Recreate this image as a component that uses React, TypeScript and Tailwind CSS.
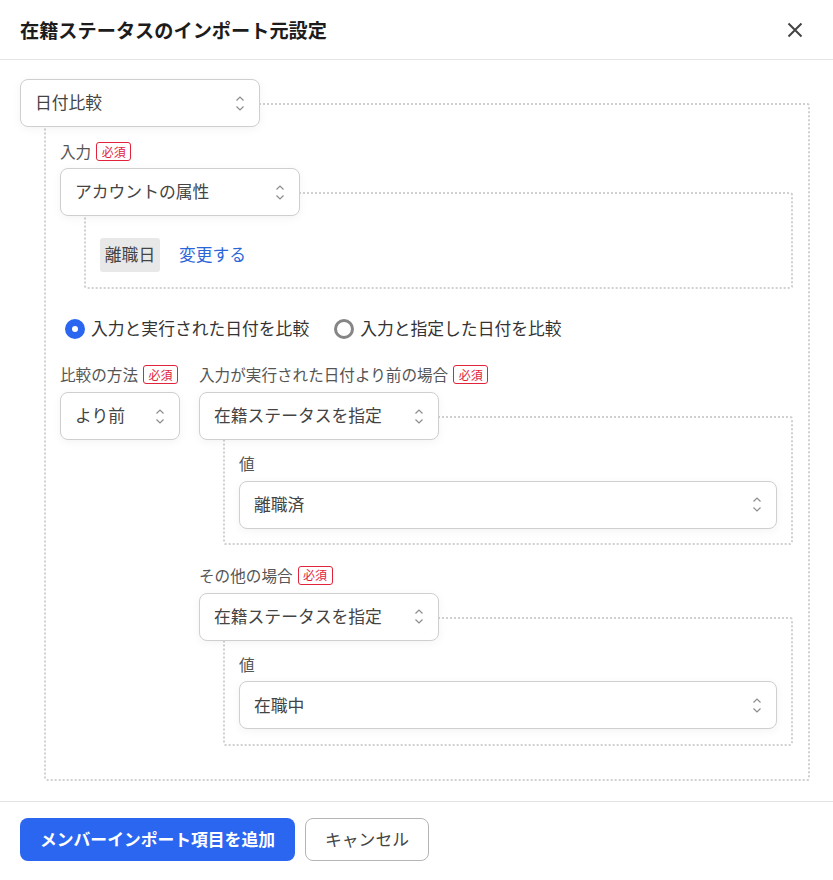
import type { ReactNode } from "react";

function UpDown() {
  return (
    <svg
      className="h-[15px] w-2 shrink-0 text-[#8c8c8c]"
      viewBox="0 0 8 15"
      fill="none"
      stroke="currentColor"
      strokeWidth="1.2"
      aria-hidden
    >
      <path d="M.5 4.500L4 1l3.500 3.500" />
      <path d="M.5 10.500L4 14l3.500-3.500" />
    </svg>
  );
}

function Select({ value, className }: { value: string; className: string }) {
  return (
    <div
      className={`relative z-10 flex h-12 shrink-0 items-center justify-between rounded-lg border border-[#cfcfcf] bg-white pl-[14px] pr-[15px] text-[#444] shadow-[0_2px_10px_rgba(0,0,0,0.05)] ${className}`}
    >
      <span className="text-[16.8px]">{value}</span>
      <UpDown />
    </div>
  );
}

function Required() {
  return (
    <span className="flex h-[19px] w-[35px] items-center justify-center rounded-[3px] border border-[#e2233c] text-xs text-[#e2233c]">
      必須
    </span>
  );
}

function Label({ text, required }: { text: string; required?: boolean }) {
  return (
    <div className="flex h-[19px] items-center gap-[5px] text-[15.6px] text-[#555]">
      <span className="whitespace-nowrap">{text}</span>
      {required ? <Required /> : null}
    </div>
  );
}

function Branch({
  select,
  className,
  children,
}: {
  select: ReactNode;
  className: string;
  children: ReactNode;
}) {
  return (
    <div>
      {select}
      <div className={`-mt-6 ml-6 rounded-[3px] border-2 border-dotted border-[#d0d0d0] ${className}`}>
        {children}
      </div>
    </div>
  );
}

function Radio({ checked, label }: { checked?: boolean; label: string }) {
  return (
    <label className="flex items-center gap-[6px] text-[16.8px] text-[#333]">
      {checked ? (
        <span className="flex h-5 w-5 items-center justify-center rounded-full bg-[#2b66f1]">
          <span className="h-[6px] w-[6px] rounded-full bg-white" />
        </span>
      ) : (
        <span className="h-5 w-5 rounded-full border-[3px] border-[#858585] bg-white" />
      )}
      <span>{label}</span>
    </label>
  );
}

function ValueBranch({ status }: { status: string }) {
  return (
    <Branch
      select={<Select value="在籍ステータスを指定" className="w-60" />}
      className="pb-[14.500px] pl-[14px] pr-[14px] pt-[36px]"
    >
      <Label text="値" />
      <Select value={status} className="mt-[7.500px] w-full" />
    </Branch>
  );
}

export default function App() {
  return (
    <div
      className="h-[880px] w-[833px] overflow-hidden bg-white"
      style={{ fontFamily: '"Noto Sans CJK JP", sans-serif' }}
    >
      <header className="flex h-[60px] items-center justify-between border-b border-[#e4e4e4] pl-5 pr-[28px]">
        <h1 className="pt-[2px] text-[19.2px] font-bold text-[#1c1c1c]">在籍ステータスのインポート元設定</h1>
        <svg
          className="h-[20px] w-[20px] text-[#444]"
          viewBox="0 0 20 20"
          fill="none"
          stroke="currentColor"
          strokeWidth="2"
          aria-hidden
        >
          <path d="M3.500 3.500l13 13M16.500 3.500l-13 13" />
        </svg>
      </header>

      <main className="h-[741px] pl-5 pr-[23px] pt-[19px]">
        <Branch
          select={<Select value="日付比較" className="w-60" />}
          className="h-[678px] pl-[14px] pr-[15px] pt-[37px]"
        >
          <Label text="入力" required />
          <div className="mt-[7px]">
            <Branch
              select={<Select value="アカウントの属性" className="w-60" />}
              className="h-[97px] pl-[14px] pt-[44px]"
            >
              <div className="flex items-center gap-[19px]">
                <span className="flex h-[34px] w-[60px] items-center justify-center rounded-[3px] bg-[#e8e8e8] text-[16.8px] text-[#444]">
                  離職日
                </span>
                <span className="text-[16.8px] text-[#2b66d9]">変更する</span>
              </div>
            </Branch>
          </div>

          <div className="mt-[30px] flex h-5 items-center gap-[25px] pl-[5px]">
            <Radio checked label="入力と実行された日付を比較" />
            <Radio label="入力と指定した日付を比較" />
          </div>

          <div className="mt-[26px] flex gap-[19px]">
            <div className="w-[120px] shrink-0">
              <Label text="比較の方法" required />
              <Select value="より前" className="mt-[8px] w-[120px]" />
            </div>
            <div className="min-w-0 flex-1">
              <Label text="入力が実行された日付より前の場合" required />
              <div className="mt-[8px]">
                <ValueBranch status="離職済" />
              </div>
              <div className="mt-[20.800px]">
                <Label text="その他の場合" required />
              </div>
              <div className="mt-[8px]">
                <ValueBranch status="在職中" />
              </div>
            </div>
          </div>
        </Branch>
      </main>

      <footer className="flex h-[79px] items-start gap-[10px] border-t border-[#e4e4e4] pl-5 pt-[16px]">
        <button
          type="button"
          className="flex h-[43px] w-[275px] items-center justify-center rounded-lg bg-[#2b66f1] text-[16.8px] font-bold text-white"
        >
          メンバーインポート項目を追加
        </button>
        <button
          type="button"
          className="flex h-[43px] w-[124px] items-center justify-center rounded-lg border border-[#b5b5b5] bg-white text-[16.8px] text-[#444]"
        >
          キャンセル
        </button>
      </footer>
    </div>
  );
}
